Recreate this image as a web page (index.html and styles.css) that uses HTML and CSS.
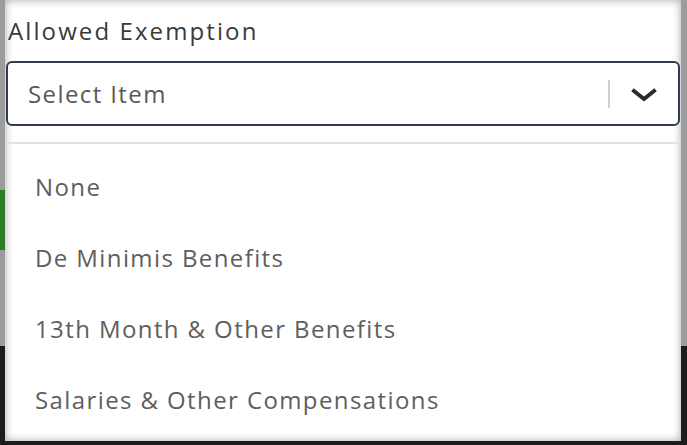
FILE: index.html
```html
<!DOCTYPE html>
<html lang="en">
<head>
<meta charset="utf-8">
<title>Allowed Exemption</title>
<link rel="stylesheet" href="styles.css">
</head>
<body>
<div class="panel">
  <label class="field-label">Allowed Exemption</label>
  <div class="select">
    <span class="select-value">Select Item</span>
    <span class="select-sep"></span>
    <svg class="chevron" width="28" height="16" viewBox="0 0 28 16" aria-hidden="true">
      <path d="M4 4 L14 12 L24 4" fill="none" stroke="#2b2b2b" stroke-width="4" stroke-linecap="square"/>
    </svg>
  </div>
  <ul class="menu">
    <li class="menu-item">None</li>
    <li class="menu-item">De Minimis Benefits</li>
    <li class="menu-item">13th Month &amp; Other Benefits</li>
    <li class="menu-item">Salaries &amp; Other Compensations</li>
  </ul>
</div>
</body>
</html>
```
FILE: styles.css
```css
html, body {
  margin: 0;
  padding: 0;
  width: 687px;
  height: 445px;
  overflow: hidden;
}
body {
  font-family: "Open Sans", Lato, sans-serif;
  font-size: 24px;
  letter-spacing: 1.4px;
  background:
    linear-gradient(#2d7b22, #2d7b22) 0 190px / 6px 60px no-repeat,
    linear-gradient(to bottom, #9c9c9c 0, #9c9c9c 346px, #1d1d1d 346px) 0 0 / 100% 100% no-repeat;
}
.panel {
  margin: 0 6px 0 5px;
  height: 441px;
  background: #fff;
  box-shadow: inset 0 0 8px rgba(0, 0, 0, 0.35);
  box-sizing: border-box;
  padding-top: 18px;
}
.field-label {
  display: block;
  margin-left: 3px;
  line-height: 26px;
  color: #3a3a3a;
  letter-spacing: 2.1px;
}
.select {
  margin-top: 17px;
  margin-left: 1px;
  width: 674px;
  height: 65px;
  box-sizing: border-box;
  border: 2px solid #2f3b50;
  border-radius: 6px;
  background: #fff;
  display: flex;
  align-items: center;
  padding-left: 20px;
}
.select-value {
  flex: 1;
  color: #595959;
}
.select-sep {
  width: 2px;
  height: 28px;
  background: #cfcfcf;
}
.chevron {
  margin: 2px 20px 0 20px;
}
.menu {
  list-style: none;
  margin: 16px 2px 0 3px;
  padding: 7px 0 0;
  border-top: 2px solid #e2e2e2;
}
.menu-item {
  height: 71px;
  display: flex;
  align-items: center;
  padding-left: 27px;
  color: #5e5e5e;
}
```
